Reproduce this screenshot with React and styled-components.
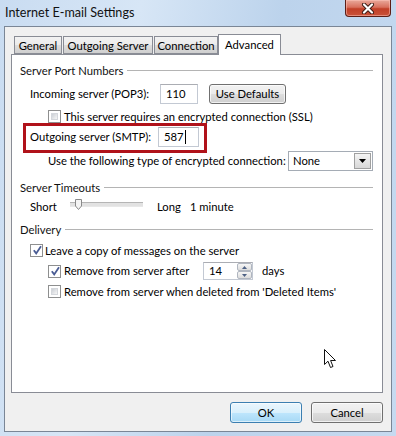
import React from 'react'
import styled, { createGlobalStyle } from 'styled-components'

const GlobalStyle = createGlobalStyle`
  html, body {
    margin: 0;
    padding: 0;
  }
  body {
    font-family: Lato, "Liberation Sans", sans-serif;
    font-size: 11.25px;
    color: #000;
  }
`;

const Frame = styled.div`
  position: relative;
  width: 396px;
  height: 436px;
  box-sizing: border-box;
  padding: 0 4px 4px 4px;
  display: flex;
  flex-direction: column;
  background: linear-gradient(100deg, #c9dcf1 0%, #d7e6f6 30%, #bcd3ec 60%, #c6daf0 100%);
  overflow: hidden;
`;

const TitleBar = styled.div`
  height: 26px;
  display: flex;
  justify-content: space-between;
  align-items: flex-start;
`;

const Title = styled.span`
  padding: 5px 0 0 1px;
  font-size: 12.6px;
  line-height: 16px;
  color: #111;
`;

const CloseButton = styled.div`
  width: 46px;
  height: 17px;
  margin-right: 1px;
  box-sizing: border-box;
  border: 1px solid #5b1e16;
  border-top: none;
  border-radius: 0 0 4px 4px;
  background: linear-gradient(to bottom, #e9a99b 0%, #d8705d 45%, #c13f27 55%, #c9533a 100%);
  box-shadow: inset 0 0 0 1px rgba(255, 200, 190, 0.5);
  display: flex;
  align-items: center;
  justify-content: center;
`;

const Client = styled.div`
  flex: 1;
  display: flex;
  flex-direction: column;
  box-sizing: border-box;
  background: #f0f0f0;
  border: 1px solid #7a8696;
  padding: 7px 8px 8px 6px;
`;

const TabStrip = styled.div`
  display: flex;
  align-items: flex-end;
  height: 20px;
  padding-left: 3px;
  position: relative;
  z-index: 1;
`;

const Tab = styled.div`
  box-sizing: border-box;
  width: ${p => p.$w}px;
  height: ${p => (p.$active ? 21 : 18)}px;
  margin-right: ${p => p.$mr || 0}px;
  margin-bottom: ${p => (p.$active ? -1 : 0)}px;
  border: 1px solid #898c95;
  border-bottom: ${p => (p.$active ? 'none' : '1px solid #898c95')};
  background: ${p => (p.$active ? '#fff' : 'linear-gradient(to bottom, #f2f2f2 0%, #ebebeb 50%, #dddddd 51%, #cfcfcf 100%)')};
  display: flex;
  justify-content: center;
  padding-top: ${p => (p.$active ? 2 : 1)}px;
  line-height: 15px;
  white-space: nowrap;
`;

const Panel = styled.div`
  flex: 1;
  box-sizing: border-box;
  background: #fff;
  border: 1px solid #898c95;
  padding: 7px 9px 0 8px;
  display: flex;
  flex-direction: column;
`;

const SectionHeader = styled.div`
  display: flex;
  align-items: center;
  gap: 4px;
  height: 16px;
  margin-top: ${p => p.$mt || 0}px;
  color: #111;
  white-space: nowrap;
`;

const HeaderLine = styled.div`
  flex: 1;
  height: 1px;
  background: #b4b4b4;
`;

const Row = styled.div`
  position: relative;
  display: flex;
  align-items: center;
  height: ${p => p.$h || 20}px;
  margin-top: ${p => p.$mt || 0}px;
  padding-left: ${p => p.$indent || 0}px;
`;

const Highlight = styled.div`
  position: absolute;
  left: 3px;
  top: -4px;
  width: 184px;
  height: 30px;
  box-sizing: border-box;
  border: 3px solid #b0121a;
  pointer-events: none;
`;

const Label = styled.span`
  width: ${p => (p.$w ? `${p.$w}px` : 'auto')};
  flex-shrink: 0;
  margin-left: ${p => p.$ml || 0}px;
  white-space: nowrap;
  line-height: 16px;
`;

const TextBox = styled.div`
  box-sizing: border-box;
  width: ${p => p.$w}px;
  height: ${p => p.$h || 20}px;
  border: 1px solid #c3c9d3;
  border-top-color: #abadb3;
  background: #fff;
  padding-left: 5px;
  display: flex;
  align-items: center;
  line-height: 16px;
`;

const Caret = styled.span`
  display: inline-block;
  width: 1px;
  height: 14px;
  margin-left: 1px;
  background: #000;
`;

const Button = styled.div`
  box-sizing: border-box;
  width: ${p => p.$w}px;
  height: ${p => p.$h || 21}px;
  margin-left: ${p => p.$ml || 0}px;
  border: 1px solid ${p => (p.$focused ? '#3c7fb1' : '#707070')};
  border-radius: 3px;
  background: ${p => (p.$focused
    ? 'linear-gradient(to bottom, #eaf6fd 0%, #d9f0fc 50%, #bee6fd 51%, #a7d9f5 100%)'
    : 'linear-gradient(to bottom, #f2f2f2 0%, #ebebeb 50%, #dddddd 51%, #cfcfcf 100%)')};
  box-shadow: inset 0 0 0 1px ${p => (p.$focused ? 'rgba(255,255,255,0.6)' : 'rgba(255,255,255,0.7)')};
  display: flex;
  align-items: center;
  justify-content: center;
  line-height: 16px;
  white-space: nowrap;
`;

const BoxOuter = styled.div`
  box-sizing: border-box;
  width: 13px;
  height: 13px;
  flex-shrink: 0;
  border: 1px solid #8e8f8f;
  background: #fff;
  padding: 2px;
  position: relative;
`;

const BoxInner = styled.div`
  box-sizing: border-box;
  width: 7px;
  height: 7px;
  background: linear-gradient(135deg, #cbcfd5 0%, #f6f6f6 100%);
  border: 1px solid #d4d7dc;
`;

const CheckMark = styled.svg`
  position: absolute;
  left: 1px;
  top: 0px;
`;

const Select = styled.div`
  box-sizing: border-box;
  width: 86px;
  height: 20px;
  border: 1px solid #a5acb5;
  background: #fff;
  display: flex;
  align-items: center;
  padding: 1px;
`;

const SelectText = styled.span`
  flex: 1;
  padding-left: 3px;
  line-height: 16px;
`;

const DropButton = styled.div`
  box-sizing: border-box;
  width: 17px;
  height: 16px;
  border: 1px solid #a0a0a0;
  background: linear-gradient(to bottom, #f4f4f4, #d8d8d8);
  display: flex;
  align-items: center;
  justify-content: center;
`;

const Track = styled.div`
  position: relative;
  width: 73px;
  height: 3px;
  margin-top: -6px;
  border-top: 1px solid #b5b5b5;
  border-bottom: 1px solid #e8e8e8;
  background: #e2e2e2;
  flex-shrink: 0;
`;

const Thumb = styled.svg`
  position: absolute;
  left: 5px;
  top: -4px;
`;

const Spinner = styled.div`
  display: flex;
  box-sizing: border-box;
  width: 50px;
  height: 18px;
  border: 1px solid #c3c9d3;
  border-top-color: #abadb3;
  background: #fff;
`;

const SpinText = styled.span`
  flex: 1;
  padding-left: 5px;
  line-height: 16px;
`;

const SpinButtons = styled.div`
  width: 15px;
  display: flex;
  flex-direction: column;
`;

const SpinArrow = styled.div`
  flex: 1;
  box-sizing: border-box;
  border: 1px solid #b0b6c0;
  border-radius: 2px;
  background: linear-gradient(to bottom, #f6f6f6, #dcdcdc);
  display: flex;
  align-items: center;
  justify-content: center;
`;

const ButtonRow = styled.div`
  display: flex;
  justify-content: flex-end;
  margin-top: 9px;
`;

const Pointer = styled.svg`
  position: absolute;
  left: 324px;
  top: 349px;
`;

function CheckBox({ checked }) {
  return (
    <BoxOuter>
      {checked ? (
        <CheckMark width="11" height="11" viewBox="0 0 11 11">
          <path d="M1.8 5.2 L4.2 8.4 L9 1.2" fill="none" stroke="#4a5c94" strokeWidth="1.8" />
        </CheckMark>
      ) : (
        <BoxInner />
      )}
    </BoxOuter>
  );
}

function Triangle({ down, color = '#000', w = 7, h = 4 }) {
  return (
    <svg width={w} height={h} viewBox={`0 0 ${w} ${h}`}>
      <path d={down ? `M0 0 L${w} 0 L${w / 2} ${h} Z` : `M0 ${h} L${w} ${h} L${w / 2} 0 Z`} fill={color} />
    </svg>
  );
}

export default function App() {
  return (
    <>
      <GlobalStyle />
      <Frame>
        <TitleBar>
          <Title>Internet E-mail Settings</Title>
          <CloseButton>
            <svg width="14" height="11" viewBox="0 0 14 11">
              <path d="M3 1.5 L11 9.5 M11 1.5 L3 9.5" stroke="#3a1a14" strokeWidth="4" strokeLinecap="round" />
              <path d="M3 1.5 L11 9.5 M11 1.5 L3 9.5" stroke="#fff" strokeWidth="2.2" strokeLinecap="round" />
            </svg>
          </CloseButton>
        </TitleBar>
        <Client>
          <TabStrip>
            <Tab $w={48} $mr={1}>General</Tab>
            <Tab $w={90} $mr={1}>Outgoing Server</Tab>
            <Tab $w={64}>Connection</Tab>
            <Tab $w={63} $active>Advanced</Tab>
          </TabStrip>
          <Panel>
            <SectionHeader>
              <span>Server Port Numbers</span>
              <HeaderLine />
            </SectionHeader>
            <Row $mt={6} $indent={10}>
              <Label $w={130}>Incoming server (POP3):</Label>
              <TextBox $w={38}>110</TextBox>
              <Button $w={77} $h={20} $ml={11}>Use Defaults</Button>
            </Row>
            <Row $mt={6} $h={13} $indent={28}>
              <CheckBox />
              <Label $ml={3}>This server requires an encrypted connection (SSL)</Label>
            </Row>
            <Row $mt={4} $indent={10}>
              <Label $w={128}>Outgoing server (SMTP):</Label>
              <TextBox $w={41}>587<Caret /></TextBox>
              <Highlight />
            </Row>
            <Row $mt={4} $indent={28}>
              <Label $w={240}>Use the following type of encrypted connection:</Label>
              <Select>
                <SelectText>None</SelectText>
                <DropButton>
                  <Triangle down w={7} h={4} />
                </DropButton>
              </Select>
            </Row>
            <SectionHeader $mt={8}>
              <span>Server Timeouts</span>
              <HeaderLine />
            </SectionHeader>
            <Row $mt={4} $h={16} $indent={10}>
              <Label $w={40}>Short</Label>
              <Track>
                <Thumb width="7" height="11" viewBox="0 0 7 11">
                  <path d="M0.5 0.5 H6.5 V7 L3.5 10.5 L0.5 7 Z" fill="#f4f4f4" stroke="#8a8a8a" />
                </Thumb>
              </Track>
              <Label $ml={14}>Long</Label>
              <Label $ml={9}>1 minute</Label>
            </Row>
            <SectionHeader $mt={6}>
              <span>Delivery</span>
              <HeaderLine />
            </SectionHeader>
            <Row $mt={7} $h={13} $indent={10}>
              <CheckBox checked />
              <Label $ml={2}>Leave a copy of messages on the server</Label>
            </Row>
            <Row $mt={5} $h={18} $indent={28}>
              <CheckBox checked />
              <Label $ml={3} $w={139}>Remove from server after</Label>
              <Spinner>
                <SpinText>14</SpinText>
                <SpinButtons>
                  <SpinArrow><Triangle w={5} h={3} color="#4d6185" /></SpinArrow>
                  <SpinArrow><Triangle down w={5} h={3} color="#4d6185" /></SpinArrow>
                </SpinButtons>
              </Spinner>
              <Label $ml={9}>days</Label>
            </Row>
            <Row $mt={5} $h={13} $indent={28}>
              <CheckBox />
              <Label $ml={3}>Remove from server when deleted from 'Deleted Items'</Label>
            </Row>
          </Panel>
          <ButtonRow>
            <Button $w={72} $focused>OK</Button>
            <Button $w={72} $ml={9}>Cancel</Button>
          </ButtonRow>
        </Client>
        <Pointer width="13" height="20" viewBox="0 0 13 20">
          <path d="M0.5 0.5 L0.5 15.5 L4 12.2 L6.5 18.5 L9 17.5 L6.6 11.5 L11.5 11.5 Z" fill="#fff" stroke="#111" strokeWidth="1" strokeLinejoin="round" />
        </Pointer>
      </Frame>
    </>
  );
}
